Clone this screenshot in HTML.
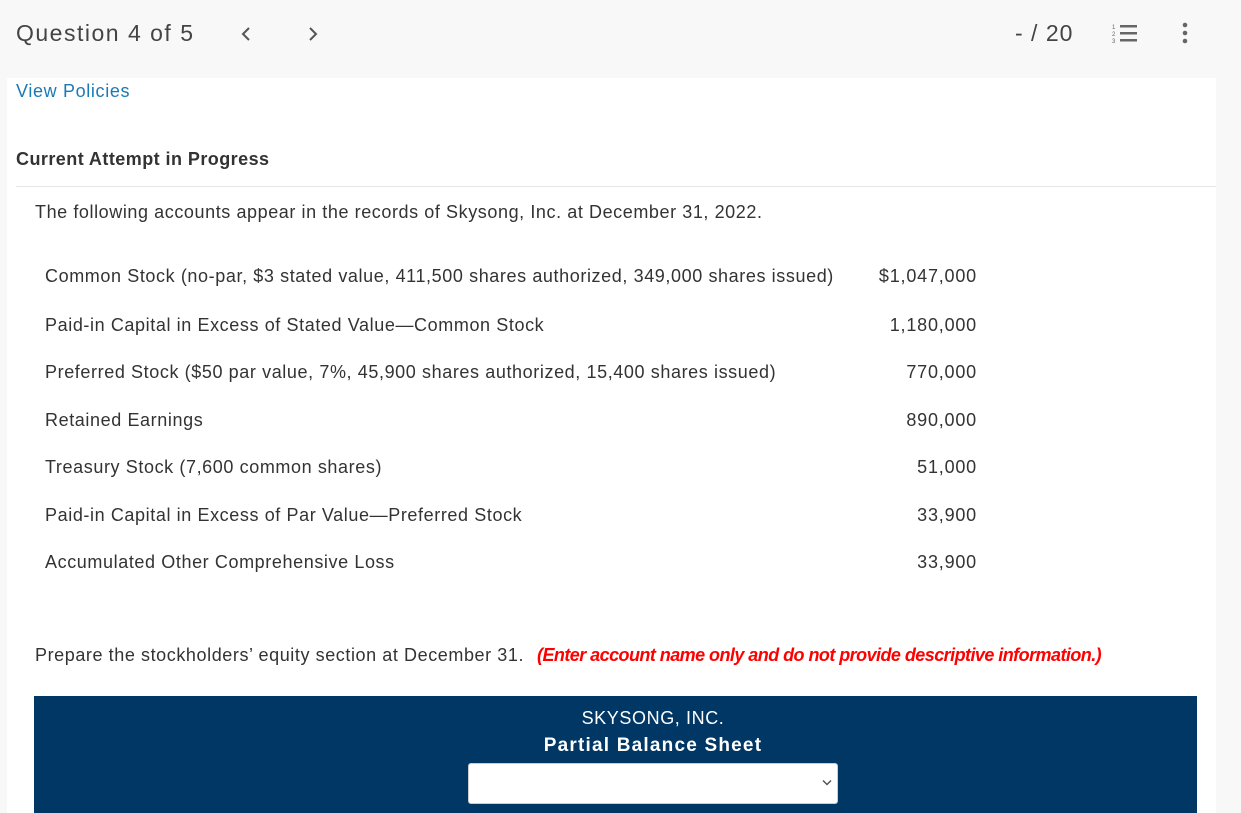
<!DOCTYPE html>
<html><head><style>
body{margin:0;width:1241px;height:813px;overflow:hidden;background:#f8f8f8;font-family:"Liberation Sans",sans-serif;color:#333;position:relative}
.a{position:absolute;white-space:nowrap}
#panel{position:absolute;left:7px;top:78px;width:1209px;height:735px;background:#fff}
.row{font-size:18px;color:#333;letter-spacing:0.6px}
.num{font-size:18px;color:#333;text-align:right;width:250px;left:727px;letter-spacing:0.8px}
</style></head><body>
<div class="a" style="left:16px;top:20px;font-size:23px;color:#444;letter-spacing:1.5px">Question 4 of 5</div>
<svg class="a" style="left:241px;top:26px" width="10" height="16"><path d="M8 2 L2 8 L8 14" stroke="#555" stroke-width="2" fill="none"/></svg>
<svg class="a" style="left:308px;top:26px" width="10" height="16"><path d="M2 2 L8 8 L2 14" stroke="#555" stroke-width="2" fill="none"/></svg>
<div class="a" style="left:1015px;top:20px;font-size:23px;color:#444;letter-spacing:1px">- / 20</div>
<svg class="a" style="left:1112px;top:22px" width="26" height="22"><g fill="#666"><rect x="8" y="3" width="17" height="2.5"/><rect x="8" y="10" width="17" height="2.5"/><rect x="8" y="17" width="17" height="2.5"/><text x="0" y="7" font-size="6" font-family="Liberation Sans">1</text><text x="0" y="14" font-size="6" font-family="Liberation Sans">2</text><text x="0" y="21" font-size="6" font-family="Liberation Sans">3</text></g></svg>
<svg class="a" style="left:1181px;top:22px" width="8" height="22"><g fill="#666"><circle cx="4" cy="3" r="2.3"/><circle cx="4" cy="11" r="2.3"/><circle cx="4" cy="19" r="2.3"/></g></svg>
<div id="panel"></div>
<div class="a" style="left:16px;top:81px;font-size:18px;color:#1a7ab5;letter-spacing:0.65px">View Policies</div>
<div class="a" style="left:16px;top:149px;font-size:18px;font-weight:bold;color:#333;letter-spacing:0.45px">Current Attempt in Progress</div>
<div class="a" style="left:16px;top:186px;width:1200px;height:1px;background:#e6e6e6"></div>
<div class="a row" style="left:35px;top:202px;letter-spacing:0.58px">The following accounts appear in the records of Skysong, Inc. at December 31, 2022.</div>
<div class="a row" style="left:45px;top:266px">Common Stock (no-par, $3 stated value, 411,500 shares authorized, 349,000 shares issued)</div>
<div class="a num" style="top:266px">$1,047,000</div>
<div class="a row" style="left:45px;top:315px">Paid-in Capital in Excess of Stated Value—Common Stock</div>
<div class="a num" style="top:315px">1,180,000</div>
<div class="a row" style="left:45px;top:362px">Preferred Stock ($50 par value, 7%, 45,900 shares authorized, 15,400 shares issued)</div>
<div class="a num" style="top:362px">770,000</div>
<div class="a row" style="left:45px;top:410px">Retained Earnings</div>
<div class="a num" style="top:410px">890,000</div>
<div class="a row" style="left:45px;top:457px">Treasury Stock (7,600 common shares)</div>
<div class="a num" style="top:457px">51,000</div>
<div class="a row" style="left:45px;top:505px">Paid-in Capital in Excess of Par Value—Preferred Stock</div>
<div class="a num" style="top:505px">33,900</div>
<div class="a row" style="left:45px;top:552px">Accumulated Other Comprehensive Loss</div>
<div class="a num" style="top:552px">33,900</div>
<div class="a row" style="left:35px;top:645px;letter-spacing:0.58px">Prepare the stockholders’ equity section at December 31. </div>
<div class="a" style="left:537px;top:645px;font-size:18px;color:#f00;font-weight:bold;font-style:italic;letter-spacing:-0.55px">(Enter account name only and do not provide descriptive information.)</div>
<div class="a" style="left:34px;top:696px;width:1163px;height:117px;background:#003764"></div>
<div class="a" style="left:453px;top:708px;width:400px;text-align:center;color:#fff;font-size:18px;letter-spacing:0.6px">SKYSONG, INC.</div>
<div class="a" style="left:453px;top:735px;width:400px;text-align:center;color:#fff;font-size:19px;font-weight:bold;letter-spacing:1.2px">Partial Balance Sheet</div>
<div class="a" style="left:468px;top:763px;width:370px;height:41px;background:#fff;border-radius:3px;border:1px solid #ccc;box-sizing:border-box"></div>
<svg class="a" style="left:822px;top:779px" width="10" height="8"><path d="M1 1.5 L5 5.5 L9 1.5" stroke="#555" stroke-width="1.5" fill="none"/></svg>
</body></html>
